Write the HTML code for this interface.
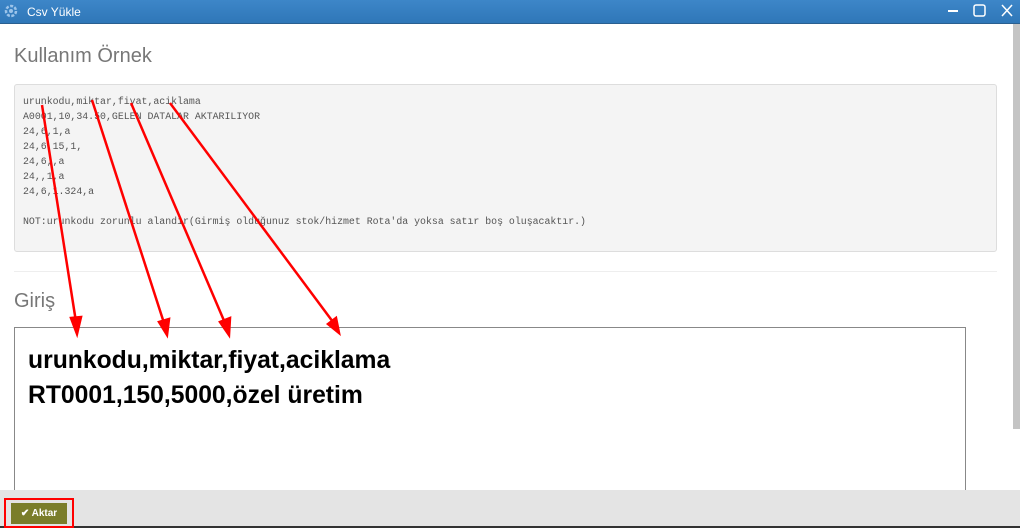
<!DOCTYPE html>
<html><head><meta charset="utf-8"><style>
*{margin:0;padding:0;box-sizing:border-box}
body{width:1020px;height:530px;overflow:hidden;background:#fff;font-family:"Liberation Sans",sans-serif;position:relative}
.tb{position:absolute;left:0;top:0;width:1020px;height:24px;background:linear-gradient(#3d86c8,#2f77b8);border-bottom:1px solid #2a5f90}
.tb .t{position:absolute;left:27px;top:5px;color:#fff;font-size:12px}
.sb{position:absolute;left:1013px;top:24px;width:7px;height:405px;background:#c4c4c4}
.h{position:absolute;left:14px;color:#777;font-size:20px}
.pre{position:absolute;left:14px;top:84px;width:983px;height:168px;background:#f4f4f4;border:1px solid #ddd;border-radius:3px;font-family:"Liberation Mono",monospace;font-size:9.9px;color:#555;line-height:15px;padding:9px 8px;white-space:pre}
.hr{position:absolute;left:14px;top:271px;width:983px;border-top:1px solid #eee}
.ta{position:absolute;left:14px;top:327px;width:952px;height:165px;border:1px solid #888;border-bottom:none;padding:15px 13px;font-weight:bold;font-size:24.7px;line-height:35px;color:#000}
.ft{position:absolute;left:0;top:490px;width:1020px;height:38px;background:#e4e4e4;border-bottom:2px solid #333}
.btn{position:absolute;left:4px;top:498px;width:70px;height:30px;border:2px solid #f00}
.btn div{position:absolute;left:5px;top:3px;width:56px;height:21px;background:#7a7d2a;color:#fff;font-size:10px;font-weight:bold;line-height:21px;text-align:center}
svg{position:absolute;left:0;top:0}
</style></head><body>
<div class="tb"><svg width="24" height="24" style="left:2px"><circle cx="9" cy="11" r="5" fill="none" stroke="#9cc4ea" stroke-width="2.5" stroke-dasharray="3 1.5"/><circle cx="9" cy="11" r="2" fill="#9cc4ea"/></svg><span class="t">Csv Yükle</span>
<svg width="1020" height="24"><line x1="948" y1="11" x2="958" y2="11" stroke="#fff" stroke-width="2"/><rect x="974" y="5" width="11" height="11" rx="2" fill="none" stroke="#fff" stroke-width="1.5"/><path d="M1002 5L1012 16M1012 5L1002 16" stroke="#fff" stroke-width="1.5"/></svg></div>
<div class="sb"></div>
<div class="h" style="top:45px">Kullanım Örnek</div>
<div class="pre">urunkodu,miktar,fiyat,aciklama
A0001,10,34.50,GELEN DATALAR AKTARILIYOR
24,6,1,a
24,6,15,1,
24,6,,a
24,,1,a
24,6,1.324,a

NOT:urunkodu zorunlu alandir(Girmiş olduğunuz stok/hizmet Rota'da yoksa satır boş oluşacaktır.)</div>
<div class="hr"></div>
<div class="h" style="top:290px">Giriş</div>
<div class="ta">urunkodu,miktar,fiyat,aciklama<br>RT0001,150,5000,özel üretim</div>
<div class="ft"></div>
<div class="btn"><div>✔ Aktar</div></div>
<svg width="1020" height="530">
<g stroke="#f00" stroke-width="2.5" fill="#f00">
<line x1="42" y1="105" x2="76" y2="322"/><path d="M71 318L77 334L81 317Z"/>
<line x1="92" y1="100" x2="164" y2="323"/><path d="M159 322L167 335L169 319Z"/>
<line x1="131" y1="103" x2="225" y2="323"/><path d="M220 322L229 335L230 318Z"/>
<line x1="170" y1="103" x2="333" y2="322"/><path d="M328 324L339 333L336 318Z"/>
</g></svg>
</body></html>
